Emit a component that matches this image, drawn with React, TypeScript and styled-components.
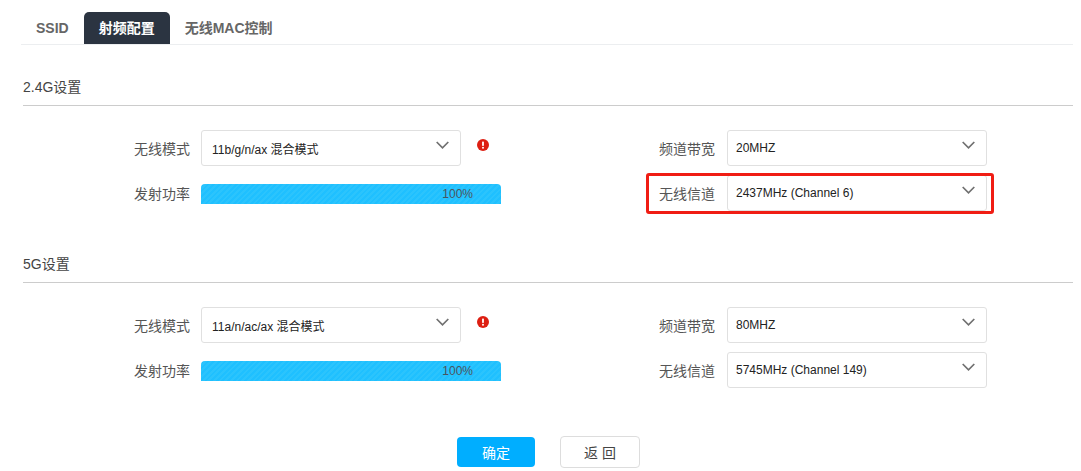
import React from "react";
import styled, { createGlobalStyle } from "styled-components";

const Global = createGlobalStyle`
  html, body { margin: 0; padding: 0; background: #fff; overflow: hidden; }
  body { font-family: "Liberation Sans", "Noto Sans CJK SC", sans-serif; }
`;

const Page = styled.div`
  position: relative;
  width: 1081px;
  height: 471px;
  overflow: hidden;
`;

const Tabs = styled.div`
  display: flex;
  height: 32px;
  margin: 12px 8px 0 21px;
  box-shadow: 0 1px 0 #eceef0;
`;

const Tab = styled.div<{ $active?: boolean }>`
  padding: 0 15px;
  line-height: 32px;
  font-size: 14px;
  font-weight: 700;
  border-radius: 5px 5px 0 0;
  color: ${(p) => (p.$active ? "#fff" : "#666")};
  background: ${(p) => (p.$active ? "#2b3441" : "transparent")};
`;

const Section = styled.section`
  margin: 0 8px 0 23px;
  padding-top: 33px;
  height: 144px;
`;

const SectionTitle = styled.h3`
  margin: 0;
  height: 28px;
  line-height: 20px;
  font-size: 14px;
  font-weight: 400;
  color: #444;
  border-bottom: 1px solid #ccc;
`;

const Fields = styled.div`
  display: grid;
  grid-template-columns: 526px 1fr;
  grid-auto-rows: 36px;
  row-gap: 9px;
  margin-top: 24px;
`;

const Field = styled.div`
  display: flex;
  align-items: flex-start;
`;

const Label = styled.label<{ $gap: number }>`
  width: 178px;
  flex: none;
  box-sizing: border-box;
  padding-right: ${(p) => p.$gap}px;
  text-align: right;
  line-height: 38px;
  font-size: 14px;
  color: #555;
  white-space: nowrap;
`;

const Select = styled.div<{ $inset: number }>`
  display: flex;
  align-items: center;
  justify-content: space-between;
  width: 260px;
  height: 36px;
  box-sizing: border-box;
  padding: 0 11px 0 ${(p) => p.$inset}px;
  border: 1px solid #e0e0e0;
  border-radius: 3px;
  background: #fff;
  font-size: 12px;
  color: #222;
  white-space: nowrap;
`;

const Chevron = styled.svg`
  width: 13px;
  height: 8px;
  margin-top: -6px;
  flex: none;
`;

const Alert = styled.svg`
  width: 12px;
  height: 12px;
  margin: 9px 0 0 16px;
  flex: none;
`;

const Meter = styled.div`
  display: flex;
  justify-content: flex-end;
  align-items: center;
  width: 300px;
  height: 20px;
  margin-top: 9px;
  padding-right: 28px;
  box-sizing: border-box;
  border-radius: 4px 4px 0 0;
  font-size: 12px;
  color: #4a5560;
  background: repeating-linear-gradient(
    -45deg,
    #1fc0ff 0,
    #1fc0ff 2px,
    #2bc4fd 2px,
    #2bc4fd 4px
  );
`;

const Actions = styled.div`
  display: flex;
  align-items: center;
  height: 32px;
  margin: 38px 0 0 457px;
`;

const PrimaryButton = styled.button`
  width: 78px;
  height: 30px;
  padding: 0;
  border: 0;
  border-radius: 4px;
  background: #00aeff;
  color: #fff;
  font: 400 14px "Liberation Sans", "Noto Sans CJK SC", sans-serif;
`;

const GhostButton = styled.button`
  width: 80px;
  height: 32px;
  margin-left: 25px;
  padding: 0;
  border: 1px solid #ddd;
  border-radius: 4px;
  background: #fff;
  color: #444;
  font: 400 14px "Liberation Sans", "Noto Sans CJK SC", sans-serif;
`;

const Highlight = styled.div`
  position: absolute;
  left: 646px;
  top: 173px;
  width: 348px;
  height: 41px;
  box-sizing: border-box;
  border: 3px solid #f01d14;
  border-radius: 3px;
  pointer-events: none;
`;

const ChevronIcon = () => (
  <Chevron viewBox="0 0 13 8">
    <path d="M0.7 1 6.5 6.8 12.3 1" fill="none" stroke="#707070" strokeWidth="1.7" />
  </Chevron>
);

const SelectBox = ({ value, inset }: { value: string; inset: number }) => (
  <Select $inset={inset}>
    <span>{value}</span>
    <ChevronIcon />
  </Select>
);

const AlertIcon = () => (
  <Alert viewBox="0 0 12 12">
    <circle cx="6" cy="6" r="6" fill="#dd1f12" />
    <rect x="5.1" y="2.4" width="1.8" height="4.6" rx="0.7" fill="#fff" />
    <circle cx="6" cy="8.7" r="1" fill="#fff" />
  </Alert>
);

const RadioSection = ({
  title,
  mode,
  width,
  channel,
}: {
  title: string;
  mode: string;
  width: string;
  channel: string;
}) => (
  <Section>
    <SectionTitle>{title}</SectionTitle>
    <Fields>
      <Field>
        <Label $gap={11}>无线模式</Label>
        <SelectBox value={mode} inset={10} />
        <AlertIcon />
      </Field>
      <Field>
        <Label $gap={12}>频道带宽</Label>
        <SelectBox value={width} inset={8} />
      </Field>
      <Field>
        <Label $gap={11}>发射功率</Label>
        <Meter>100%</Meter>
      </Field>
      <Field>
        <Label $gap={12}>无线信道</Label>
        <SelectBox value={channel} inset={8} />
      </Field>
    </Fields>
  </Section>
);

export default function App() {
  return (
    <Page>
      <Global />
      <Tabs>
        <Tab>SSID</Tab>
        <Tab $active>射频配置</Tab>
        <Tab>无线MAC控制</Tab>
      </Tabs>
      <RadioSection
        title="2.4G设置"
        mode="11b/g/n/ax 混合模式"
        width="20MHZ"
        channel="2437MHz (Channel 6)"
      />
      <RadioSection
        title="5G设置"
        mode="11a/n/ac/ax 混合模式"
        width="80MHZ"
        channel="5745MHz (Channel 149)"
      />
      <Actions>
        <PrimaryButton>确定</PrimaryButton>
        <GhostButton>返 回</GhostButton>
      </Actions>
      <Highlight />
    </Page>
  );
}
